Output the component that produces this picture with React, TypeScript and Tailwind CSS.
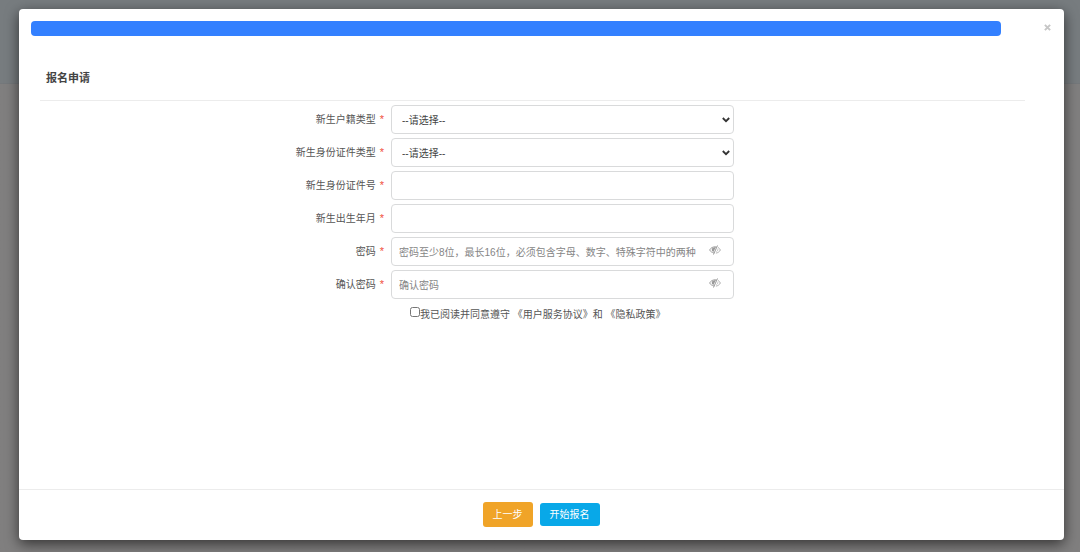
import React, { useState } from "react";

const controlClass =
  "block h-[29px] w-full rounded-[4px] border border-[#d9dadb] bg-white pt-[2px] text-[10px] text-[#444] outline-none placeholder:text-[#858585] focus:border-[#66afe9]";

function EyeCloseIcon() {
  return (
    <svg viewBox="0 0 24 20" className="h-[10px] w-[12px]" fill="none" stroke="#999" aria-hidden="true">
      <path d="M10 16C5.500 15 2.500 12.500 1.200 10 3.500 5.500 8 3.500 12.500 3.500c1 0 1.800.1 2.600.3" strokeWidth="1.800" />
      <path d="M18 4.800c2.200 1.300 3.900 3.200 4.800 5.200-1.600 3.300-5 5.700-9 6.300" strokeWidth="1.500" />
      <path d="M14 4C9 4 5.500 6 5.500 9.500c0 2 1 3.500 3.200 4.600z" fill="#999" stroke="none" />
      <path d="M17 1 9 19" strokeWidth="2" />
      <path d="M17.500 7.500c.6 2.400-.6 4.800-2.700 6" strokeWidth="1.200" />
    </svg>
  );
}

function Field({ id, label, children }: { id: string; label: string; children: React.ReactNode }) {
  return (
    <div className="grid grid-cols-[351fr_343fr_291fr] items-center">
      <label htmlFor={id} className="pr-[7px] pb-[1px] text-right leading-4">
        {label}
        <span className="ml-1 text-[11px] leading-4 text-[#f0503c]">*</span>
      </label>
      {children}
    </div>
  );
}

function ChoiceField({ id, label, options }: { id: string; label: string; options: string[] }) {
  return (
    <Field id={id} label={label}>
      <div className="relative">
        <select id={id} className={`${controlClass} appearance-none pr-5 pl-[10px]`}>
          <option value="">--请选择--</option>
          {options.map((option) => (
            <option key={option}>{option}</option>
          ))}
        </select>
        <svg
          viewBox="0 0 8 6"
          className="pointer-events-none absolute top-[12px] right-[4px] h-[6px] w-[8px]"
          fill="none"
          stroke="#333"
          strokeWidth="1.800"
          aria-hidden="true"
        >
          <path d="m.8 1 3.200 3.200L7.200 1" />
        </svg>
      </div>
    </Field>
  );
}

function PasswordField({ id, label, placeholder }: { id: string; label: string; placeholder: string }) {
  const [visible, setVisible] = useState(false);
  return (
    <Field id={id} label={label}>
      <div className="relative">
        <input
          id={id}
          type={visible ? "text" : "password"}
          placeholder={placeholder}
          className={`${controlClass} pr-[30px] pl-[7px]`}
        />
        <button
          type="button"
          aria-label="显示密码"
          onClick={() => setVisible(!visible)}
          className="absolute top-2 right-[13px] cursor-pointer"
        >
          <EyeCloseIcon />
        </button>
      </div>
    </Field>
  );
}

export default function App() {
  return (
    <div className="flex min-h-screen bg-linear-to-b from-[#777c7f] from-[83px] via-[#697177] via-[83px] to-[#807f7f] to-[84px] pt-[9px] pr-4 pb-3 pl-[19px] font-['Liberation_Sans','Noto_Sans_CJK_SC',sans-serif] text-[10px] text-[#555]">
      <div role="dialog" aria-labelledby="dialog-title" className="flex flex-1 flex-col rounded-[4px] bg-white shadow-[0_4px_14px_rgba(0,0,0,0.6)]">
        <header className="flex items-start justify-between pt-3 pr-3 pl-3">
          <div role="progressbar" aria-label="报名进度" aria-valuenow={100} className="mr-[42px] h-[15px] flex-1 rounded-[4px] bg-[#3380ff]" />
          <button type="button" aria-label="关闭" className="flex h-[13px] w-[9px] cursor-pointer items-center justify-center">
            <svg viewBox="0 0 8 8" className="h-[7px] w-[7px]" stroke="#c6c6c6" strokeWidth="2.200" aria-hidden="true">
              <path d="m1 1 6 6M7 1 1 7" />
            </svg>
          </button>
        </header>

        <main className="flex-1 pt-[34px] pr-[39px] pl-[21px]">
          <h1 id="dialog-title" className="border-b border-[#ececec] pb-[14px] pl-[6px] text-[11px] leading-4 font-bold text-[#444]">
            报名申请
          </h1>
          <form id="apply-form" className="flex flex-col gap-1 pt-1">
            <ChoiceField id="household" label="新生户籍类型" options={["本市户籍", "非本市户籍"]} />
            <ChoiceField id="id-type" label="新生身份证件类型" options={["居民身份证", "护照"]} />
            <Field id="id-number" label="新生身份证件号">
              <input id="id-number" type="text" className={`${controlClass} px-[7px]`} />
            </Field>
            <Field id="birth" label="新生出生年月">
              <input id="birth" type="text" className={`${controlClass} px-[7px]`} />
            </Field>
            <PasswordField id="password" label="密码" placeholder="密码至少8位，最长16位，必须包含字母、数字、特殊字符中的两种" />
            <PasswordField id="confirm" label="确认密码" placeholder="确认密码" />
            <div className="grid grid-cols-[351fr_634fr] pt-1">
              <div className="col-start-2 flex items-start pl-[19px] leading-4">
                <input id="agree" type="checkbox" className="h-[10px] w-[10px]" />
                <label htmlFor="agree">
                  我已阅读并同意遵守 <a href="#terms">《用户服务协议》</a>和 <a href="#privacy">《隐私政策》</a>
                </label>
              </div>
            </div>
          </form>
        </main>

        <footer className="flex items-center justify-center gap-[7px] border-t border-[#ececec] pt-3 pr-[1px] pb-[13px]">
          <button type="button" className="h-[25px] cursor-pointer rounded-[3px] bg-[#f0a428] px-[10px] text-white">
            上一步
          </button>
          <button type="submit" form="apply-form" className="h-[23px] cursor-pointer rounded-[3px] bg-[#08a8e8] px-[10px] text-white">
            开始报名
          </button>
        </footer>
      </div>
    </div>
  );
}
